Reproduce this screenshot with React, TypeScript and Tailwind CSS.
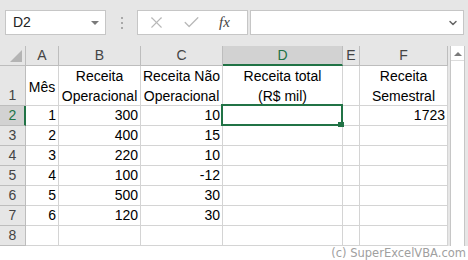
import { X, Check, ChevronDown } from 'lucide-react';

const cols = [
  { key: 'A', w: 'w-[33px]' },
  { key: 'B', w: 'w-[82px]' },
  { key: 'C', w: 'w-[82px]' },
  { key: 'D', w: 'w-[120px]' },
  { key: 'E', w: 'w-[17px]' },
  { key: 'F', w: 'w-[88px]' },
];

const rows = [
  { n: 2, a: '1', b: '300', c: '10', f: '1723' },
  { n: 3, a: '2', b: '400', c: '15' },
  { n: 4, a: '3', b: '220', c: '10' },
  { n: 5, a: '4', b: '100', c: '-12' },
  { n: 6, a: '5', b: '500', c: '30' },
  { n: 7, a: '6', b: '120', c: '30' },
  { n: 8 },
];

function NumCell({ w, value }: { w: string; value?: string }) {
  return (
    <div className={`${w} h-[20px] shrink-0 border-r border-b border-[#d4d4d4] flex items-end justify-end pr-[2px] leading-[19px]`}>
      {value}
    </div>
  );
}

export default function App() {
  return (
    <div className="w-[468px] h-[260px] overflow-hidden bg-white text-[14px] text-black font-['Liberation_Sans',Arial,sans-serif]">
      {/* formula bar */}
      <div className="h-[46px] bg-[#e6e6e6] flex items-start pt-[10px] pl-[5px]">
        <div className="w-[101px] h-[25px] bg-white border border-[#c6c6c6] flex items-center justify-between pl-[7px] pr-[6px]">
          <span className="text-[14px] text-[#222]">D2</span>
          <span className="w-0 h-0 border-l-[4px] border-r-[4px] border-t-[4px] border-l-transparent border-r-transparent border-t-[#7a7a7a]" />
        </div>
        <div className="w-[31px] h-[25px] flex flex-col items-center justify-center gap-[3px]">
          <span className="w-[2px] h-[2px] bg-[#a8a8a8]" />
          <span className="w-[2px] h-[2px] bg-[#a8a8a8]" />
          <span className="w-[2px] h-[2px] bg-[#a8a8a8]" />
        </div>
        <div className="w-[111px] h-[25px] bg-white border border-[#c6c6c6] flex items-center pl-[9px]">
          <X size={19} strokeWidth={1.4} className="text-[#b8b8b8]" />
          <Check size={19} strokeWidth={1.6} className="text-[#b8b8b8] ml-[16px]" />
          <span className="ml-[18px] italic text-[15px] text-[#444] font-['Liberation_Serif',serif]">fx</span>
        </div>
        <div className="ml-[2px] w-[214px] h-[25px] bg-white border border-[#c6c6c6] flex items-center justify-end pr-[4px]">
          <ChevronDown size={12} strokeWidth={3} className="text-[#666]" />
        </div>
      </div>

      <div className="flex h-[200px]">
        {/* sheet */}
        <div className="relative w-[448px]">
          {/* column headers */}
          <div className="flex h-[20px] bg-[#e6e6e6] text-[#444]">
            <div className="relative w-[26px] shrink-0 border-r border-b border-[#bdbdbd]">
              <svg className="absolute right-[3px] bottom-[3px]" width="12" height="12" viewBox="0 0 12 12">
                <polygon points="12,0 12,12 0,12" fill="#b4b4b4" />
              </svg>
            </div>
            {cols.map((c) =>
              c.key === 'D' ? (
                <div key={c.key} className={`${c.w} shrink-0 bg-[#d2d2d2] border-r border-[#bdbdbd] border-b-2 border-b-[#217346] text-[#217346] flex items-center justify-center leading-[18px]`}>
                  {c.key}
                </div>
              ) : (
                <div key={c.key} className={`${c.w} shrink-0 border-r border-b border-[#bdbdbd] flex items-center justify-center leading-[19px]`}>
                  {c.key}
                </div>
              )
            )}
          </div>

          {/* row 1 */}
          <div className="flex h-[40px]">
            <div className="w-[26px] shrink-0 bg-[#e6e6e6] text-[#444] border-r border-b border-[#bdbdbd] flex items-end justify-center leading-[20px]">1</div>
            <div className="w-[33px] shrink-0 border-r border-b border-[#d4d4d4] flex items-center justify-center pt-[3px]">Mês</div>
            <div className="w-[82px] shrink-0 border-r border-b border-[#d4d4d4] flex flex-col items-center leading-[20px]">
              <span>Receita</span>
              <span>Operacional</span>
            </div>
            <div className="w-[82px] shrink-0 border-r border-b border-[#d4d4d4] flex flex-col items-center leading-[20px]">
              <span>Receita Não</span>
              <span>Operacional</span>
            </div>
            <div className="w-[120px] shrink-0 border-r border-b border-[#d4d4d4] flex flex-col items-center leading-[20px]">
              <span>Receita total</span>
              <span>(R$ mil)</span>
            </div>
            <div className="w-[17px] shrink-0 border-r border-b border-[#d4d4d4]" />
            <div className="w-[88px] shrink-0 border-r border-b border-[#d4d4d4] flex flex-col items-center leading-[20px]">
              <span>Receita</span>
              <span>Semestral</span>
            </div>
          </div>

          {/* data rows */}
          {rows.map((r) => (
            <div key={r.n} className="flex h-[20px]">
              {r.n === 2 ? (
                <div className="w-[26px] shrink-0 bg-[#d2d2d2] text-[#217346] border-b border-[#bdbdbd] border-r-2 border-r-[#217346] flex items-end justify-center leading-[19px] pl-[1px]">
                  {r.n}
                </div>
              ) : (
                <div className="w-[26px] shrink-0 bg-[#e6e6e6] text-[#444] border-r border-b border-[#bdbdbd] flex items-end justify-center leading-[19px]">
                  {r.n}
                </div>
              )}
              <NumCell w="w-[33px]" value={r.a} />
              <NumCell w="w-[82px]" value={r.b} />
              <NumCell w="w-[82px]" value={r.c} />
              <NumCell w="w-[120px]" />
              <NumCell w="w-[17px]" />
              <NumCell w="w-[88px]" value={r.f} />
            </div>
          ))}

          {/* active cell D2 */}
          <div className="absolute left-[221px] top-[58px] w-[122px] h-[22px] border-2 border-[#217346]">
            <span className="absolute right-[-3px] bottom-[-3px] w-[6px] h-[5px] bg-[#217346]" />
          </div>
        </div>

        {/* vertical scrollbar */}
        <div className="w-[20px] bg-[#e6e6e6] flex pl-[2px] pr-[3px]">
          <div className="flex-1 bg-white border-x border-[#c6c6c6] flex flex-col">
            <div className="mt-[2px] h-[13px] border-b border-[#dcdcdc] flex items-center justify-center">
              <span className="w-0 h-0 border-l-[4px] border-r-[4px] border-b-[4px] border-l-transparent border-r-transparent border-b-[#7a7a7a]" />
            </div>
          </div>
        </div>
      </div>

      {/* watermark */}
      <div className="h-[14px] flex items-center justify-end pr-[2px] text-[11.5px] leading-[14px] text-[#a0a0a0] font-['DejaVu_Sans',sans-serif]">
        (c) SuperExcelVBA.com
      </div>
    </div>
  );
}
